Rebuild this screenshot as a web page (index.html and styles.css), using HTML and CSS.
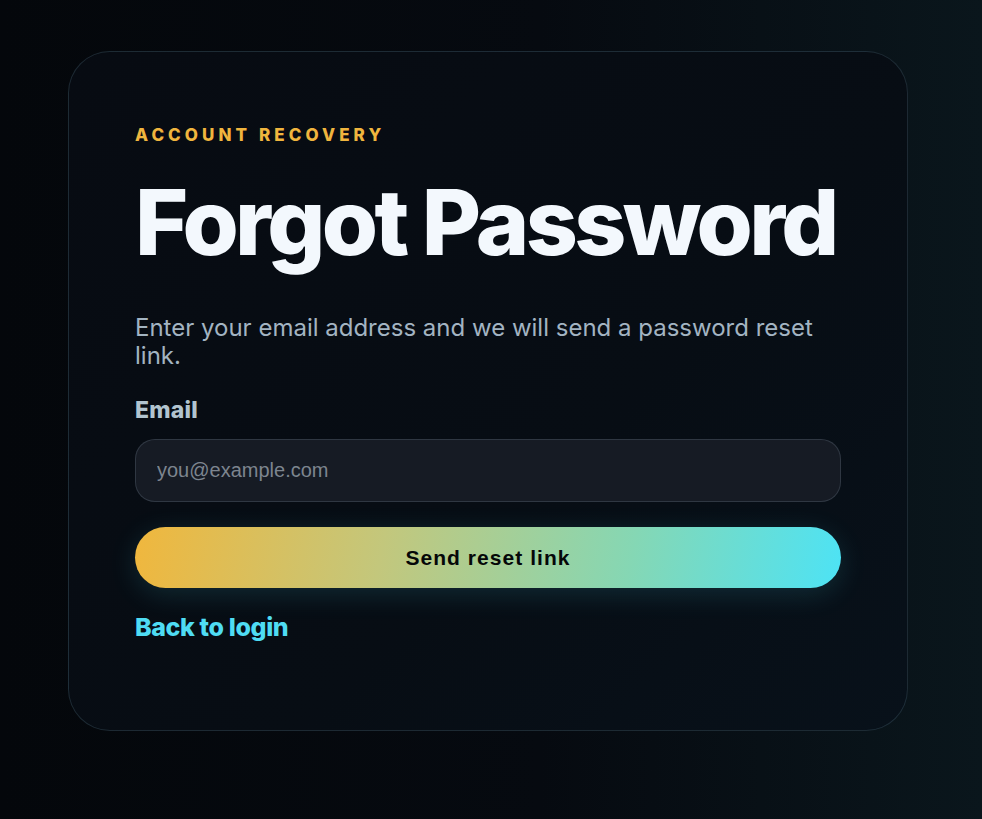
FILE: index.html
```html
<!DOCTYPE html>
<html lang="en">
<head>
<meta charset="utf-8">
<title>Forgot Password</title>
<link rel="stylesheet" href="styles.css">
</head>
<body>
<main class="page">
  <section class="card">
    <p class="eyebrow">ACCOUNT RECOVERY</p>
    <h1 class="title">Forgot Password</h1>
    <p class="lead">Enter your email address and we will send a password reset link.</p>
    <form class="form">
      <label class="label" for="email">Email</label>
      <input class="input" id="email" type="email" placeholder="you@example.com">
      <button class="button" type="button">Send reset link</button>
    </form>
    <a class="back" href="#">Back to login</a>
  </section>
</main>
</body>
</html>
```

FILE: styles.css
```css
* { box-sizing: border-box; }
html, body { margin: 0; height: 100%; }
body {
  background: linear-gradient(90deg, #04070b 0%, #060a10 55%, #0a161c 100%);
  font-family: "Inter", "Noto Sans", sans-serif;
  color: #f3f8fc;
}
.page {
  padding: 51px 0 0 68px;
}
.card {
  width: 840px;
  height: 680px;
  border: 1px solid rgba(110, 150, 170, 0.22);
  border-radius: 42px;
  background: linear-gradient(135deg, #070b12 0%, #070d14 60%, #08111a 100%);
  padding: 71px 66px 0;
  display: flex;
  flex-direction: column;
}
.eyebrow {
  margin: 0;
  font-size: 17px;
  font-weight: 800;
  letter-spacing: 0.24em;
  color: #f0b53e;
  line-height: 24px;
}
.title {
  margin: 25px 0 0;
  font-size: 91px;
  font-weight: 800;
  letter-spacing: -0.04em;
  line-height: 100px;
  white-space: nowrap;
  color: #f3f8fd;
}
.lead {
  margin: 42px 0 0;
  font-size: 24px;
  line-height: 28px;
  color: #a3b4c2;
  font-weight: 400;
}
.form {
  display: flex;
  flex-direction: column;
}
.label {
  margin-top: 26px;
  font-size: 23px;
  font-weight: 800;
  letter-spacing: 0.01em;
  color: #b2c4cf;
  line-height: 28px;
}
.input {
  margin-top: 15px;
  height: 63px;
  border-radius: 20px;
  border: 1px solid rgba(150, 170, 190, 0.2);
  background: #161b24;
  padding: 0 21px;
  font-family: "Liberation Sans", Arial, sans-serif;
  font-size: 20px;
  color: #e0e8ee;
  outline: none;
}
.input::placeholder { color: #7d858f; }
.button {
  margin-top: 25px;
  height: 61px;
  border: none;
  border-radius: 31px;
  background: linear-gradient(100deg, #f0b73d 0%, #c3c77c 35%, #85d7b4 70%, #4de3f5 100%);
  font-family: "Liberation Sans", Arial, sans-serif;
  font-weight: 700;
  font-size: 21px;
  letter-spacing: 0.05em;
  color: #050708;
  box-shadow: 0 6px 28px rgba(77, 227, 245, 0.14);
  cursor: pointer;
}
.back {
  margin-top: 25px;
  align-self: flex-start;
  font-size: 25px;
  font-weight: 800;
  letter-spacing: -0.015em;
  color: #4fdcf3;
  text-decoration: none;
  line-height: 28px;
}
```
